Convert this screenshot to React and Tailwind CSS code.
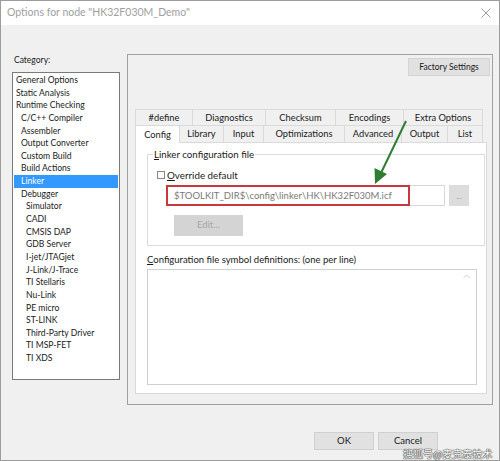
import React from 'react';

const font = { fontFamily: 'Lato, "Noto Sans", "Liberation Sans", sans-serif' };

const categories = [
  ['General Options', 0],
  ['Static Analysis', 0],
  ['Runtime Checking', 0],
  ['C/C++ Compiler', 1],
  ['Assembler', 1],
  ['Output Converter', 1],
  ['Custom Build', 1],
  ['Build Actions', 1],
  ['Linker', 1],
  ['Debugger', 1],
  ['Simulator', 2],
  ['CADI', 2],
  ['CMSIS DAP', 2],
  ['GDB Server', 2],
  ['I-jet/JTAGjet', 2],
  ['J-Link/J-Trace', 2],
  ['TI Stellaris', 2],
  ['Nu-Link', 2],
  ['PE micro', 2],
  ['ST-LINK', 2],
  ['Third-Party Driver', 2],
  ['TI MSP-FET', 2],
  ['TI XDS', 2],
];

const indent = ['pl-[2px]', 'pl-[7px]', 'pl-[12px]'];

const topTabs = [
  ['#define', 'w-[57px]'],
  ['Diagnostics', 'w-[73px]'],
  ['Checksum', 'w-[70px]'],
  ['Encodings', 'w-[68px]'],
  ['Extra Options', 'w-[80px]'],
];

const bottomTabs = [
  ['Library', 'w-[44px]'],
  ['Input', 'w-[40px]'],
  ['Optimizations', 'w-[81px]'],
  ['Advanced', 'w-[57px]'],
  ['Output', 'w-[46px]'],
  ['List', 'w-[35px]'],
];

export default function App() {
  return (
    <div className="relative w-[500px] h-[461px] bg-[#f0f0f0] border border-[#9c9c9c] flex flex-col text-[#1a1a1a]" style={font}>
      {/* title bar */}
      <div className="h-[24px] bg-white flex items-center justify-between pl-[6px] pr-[8px] shrink-0">
        <span className="text-[10.5px] text-[#a0a0a0]">Options for node "HK32F030M_Demo"</span>
        <svg width="10" height="10" viewBox="0 0 10 10" className="text-[#a0a0a0]">
          <path d="M0.5 0.5 L9.5 9.5 M9.5 0.5 L0.5 9.5" stroke="currentColor" strokeWidth="1" />
        </svg>
      </div>

      <div className="flex pt-[29px] shrink-0">
        {/* left column */}
        <div className="ml-[11px] w-[108px] flex flex-col">
          <div className="h-[18px] text-[8.5px] leading-[12px] pl-[2px]">Category:</div>
          <div className="h-[308px] bg-white border border-[#7a7a7a] pt-[1px] px-[1px] text-[8.6px]">
            {categories.map(([name, lvl]) => (
              <div
                key={name}
                className={`h-[12.65px] leading-[12.65px] whitespace-nowrap ${indent[lvl]} ${name === 'Linker' ? 'bg-[#3399ff] text-white' : ''}`}
              >
                {name}
              </div>
            ))}
          </div>
        </div>

        {/* right panel */}
        <div className="ml-[7px] w-[366px] h-[351px] border border-[#a0a0a0] flex flex-col">
          <div className="flex justify-end pt-[3px] pr-[2px]">
            <div className="w-[82px] h-[18px] bg-[#e1e1e1] border border-[#d4d4d4] text-[8.5px] flex items-center justify-center">
              Factory Settings
            </div>
          </div>

          <div className="mt-[33px] ml-[7px] w-[352px] text-[9.3px]">
            <div className="flex h-[16px]">
              {topTabs.map(([t, w]) => (
                <div key={t} className={`${w} border-t border-l border-[#dadada] last:border-r flex items-center justify-center bg-[#f0f0f0]`}>
                  {t}
                </div>
              ))}
            </div>
            <div className="flex h-[18px] border-b border-[#dadada]">
              <div className="w-[45px] bg-white border-t border-l border-r border-[#dadada] -mb-[1px] flex items-center justify-center">
                Config
              </div>
              {bottomTabs.map(([t, w]) => (
                <div key={t} className={`${w} border-t border-r border-[#dadada] flex items-center justify-center bg-[#f0f0f0]`}>
                  {t}
                </div>
              ))}
            </div>

            {/* content */}
            <div className="h-[251px] bg-white border-l border-r border-b border-[#dadada] pt-[11px] pl-[11px] pr-[1px]">
              <div className="relative border border-[#dcdcdc] h-[92px] pl-[9px] pt-[14px]">
                <div className="absolute -top-[8px] left-[5px] bg-white px-[1px] text-[9.7px] leading-[14px]">
                  <span className="underline">L</span>inker configuration file
                </div>
                <div className="flex items-center h-[12px]">
                  <div className="w-[8px] h-[8px] border border-[#888] bg-white" />
                  <span className="ml-[2px] text-[9.8px]">
                    <span className="underline">O</span>verride default
                  </span>
                </div>
                <div className="flex mt-[4px] ml-[9px]">
                  <div className="w-[279px] h-[21px] bg-white border border-[#d8d8d8] relative">
                    <div className="absolute left-[-1px] top-[-1px] w-[244px] h-[21px] border-2 border-[#c8383c]" />
                    <div className="pl-[7px] leading-[19px] text-[9.5px] text-[#7a7a7a] whitespace-nowrap">
                      $TOOLKIT_DIR$\config\linker\HK\HK32F030M.icf
                    </div>
                  </div>
                  <div className="ml-[4px] w-[20px] h-[21px] bg-[#dcdcdc] flex items-center justify-center text-[8px] text-[#9a9a9a]">
                    ...
                  </div>
                </div>
                <div className="mt-[9px] ml-[17px] w-[69px] h-[21px] bg-[#d4d4d4] flex items-center justify-center text-[9.5px] text-[#a6a6a6]">
                  Edit...
                </div>
              </div>

              <div className="mt-[7px] text-[9.5px] leading-[14px]">
                <span className="underline">C</span>onfiguration file symbol definitions: (one per line)
              </div>
              <div className="mt-[2px] w-[330px] h-[116px] border border-[#d0d0d0] bg-white flex justify-end pr-[6px] pt-[4px]">
                <svg width="7" height="5" viewBox="0 0 7 5">
                  <path d="M0.5 4 L3.5 1 L6.5 4" fill="none" stroke="#d0d0d0" strokeWidth="1" />
                </svg>
              </div>
            </div>
          </div>
        </div>
      </div>

      {/* bottom buttons */}
      <div className="flex pl-[313px] mt-[27px] gap-[4px] text-[9.5px]">
        <div className="w-[60px] h-[18px] bg-[#e1e1e1] border border-[#d0d0d0] flex items-center justify-center">OK</div>
        <div className="w-[60px] h-[18px] bg-[#e1e1e1] border border-[#d0d0d0] flex items-center justify-center">Cancel</div>
      </div>

      {/* annotation arrow */}
      <svg className="absolute left-0 top-0 pointer-events-none" width="500" height="461">
        <path d="M405 120 L380 172" stroke="#2f7d32" strokeWidth="2" fill="none" />
        <path d="M374 183 L373.5 167 L386 173 Z" fill="#2f7d32" />
      </svg>

      {/* watermark */}
      <div
        className="absolute left-[402px] top-[445px] text-[10px] text-white whitespace-nowrap"
        style={{ fontFamily: '"Noto Sans CJK SC", sans-serif', textShadow: '0 0 1px #333, 0 0 1px #333, 0 0 1px #333' }}
      >
        搜狐号@麦克泰技术
      </div>
    </div>
  );
}
